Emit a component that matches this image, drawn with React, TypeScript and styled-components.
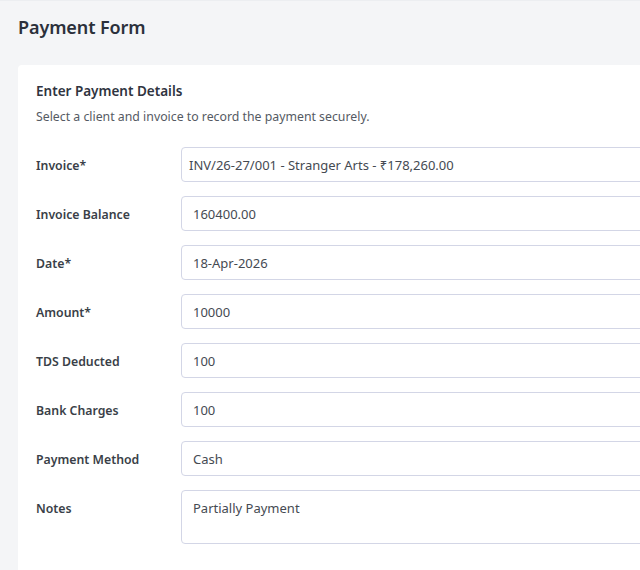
import React from 'react'
import styled, { createGlobalStyle } from 'styled-components'

const GlobalStyle = createGlobalStyle`
  html, body {
    margin: 0;
    padding: 0;
    overflow: hidden;
    background: #f4f5f7;
    font-family: 'Noto Sans', 'Open Sans', sans-serif;
  }
`

const Page = styled.div`
  width: 640px;
  height: 570px;
  overflow: hidden;
  border-top: 1px solid #eceef1;
  box-sizing: border-box;
  padding: 0 0 0 18px;
`

const Title = styled.h1`
  margin: 0;
  padding-top: 14px;
  height: 50px;
  font-size: 18px;
  font-weight: 600;
  color: #2b303b;
  letter-spacing: -0.1px;
`

const Card = styled.div`
  width: 900px;
  background: #fff;
  border-radius: 4px;
  padding: 17px 18px 40px;
  box-sizing: border-box;
`

const CardTitle = styled.h2`
  margin: 0;
  font-size: 13.5px;
  font-weight: 600;
  color: #2f3440;
  line-height: 18px;
`

const CardHint = styled.p`
  margin: 8px 0 0;
  font-size: 12.3px;
  color: #555a63;
  line-height: 17px;
`

const Fields = styled.div`
  margin-top: 22px;
  display: flex;
  flex-direction: column;
  gap: 14px;
`

const Row = styled.div<{ $top?: boolean }>`
  display: grid;
  grid-template-columns: 145px 1fr;
  align-items: ${(p) => (p.$top ? 'start' : 'center')};
`

const Label = styled.label<{ $top?: boolean }>`
  font-size: 12.3px;
  font-weight: 600;
  color: #3a3f48;
  padding-top: ${(p) => (p.$top ? '10px' : '1px')};
`

const Field = styled.div<{ $tall?: boolean; $pad?: number }>`
  height: ${(p) => (p.$tall ? '54px' : '35px')};
  border: 1px solid #d3d6e6;
  border-radius: 4px;
  box-sizing: border-box;
  padding: ${(p) => (p.$tall ? '8px' : '0')} ${(p) => p.$pad ?? 11}px 0;
  display: flex;
  align-items: ${(p) => (p.$tall ? 'flex-start' : 'center')};
  font-size: 13px;
  color: #454a52;
`

const rows = [
  { label: 'Invoice*', value: 'INV/26-27/001 - Stranger Arts - ₹178,260.00', pad: 7 },
  { label: 'Invoice Balance', value: '160400.00' },
  { label: 'Date*', value: '18-Apr-2026' },
  { label: 'Amount*', value: '10000' },
  { label: 'TDS Deducted', value: '100' },
  { label: 'Bank Charges', value: '100' },
  { label: 'Payment Method', value: 'Cash' },
]

export default function App() {
  return (
    <>
      <GlobalStyle />
      <Page>
        <Title>Payment Form</Title>
        <Card>
          <CardTitle>Enter Payment Details</CardTitle>
          <CardHint>Select a client and invoice to record the payment securely.</CardHint>
          <Fields>
            {rows.map((r) => (
              <Row key={r.label}>
                <Label>{r.label}</Label>
                <Field $pad={r.pad}>{r.value}</Field>
              </Row>
            ))}
            <Row $top>
              <Label $top>Notes</Label>
              <Field $tall>Partially Payment</Field>
            </Row>
          </Fields>
        </Card>
      </Page>
    </>
  )
}
